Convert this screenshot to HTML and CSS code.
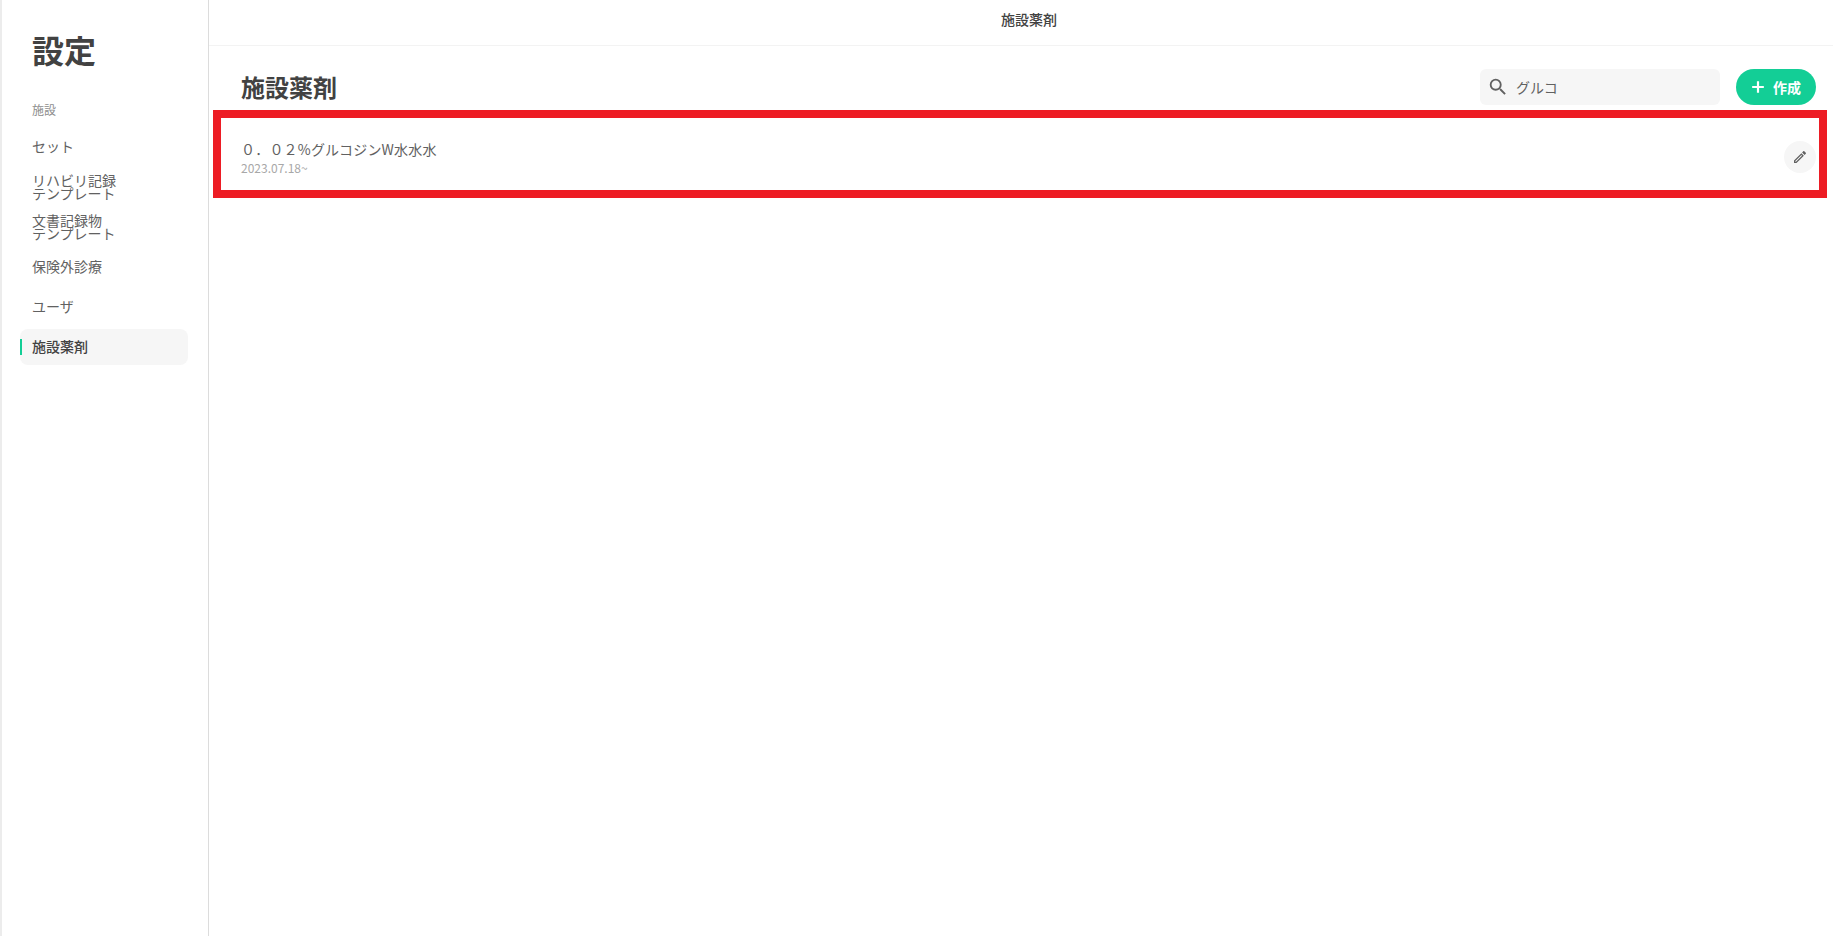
FILE: index.html
```html
<!DOCTYPE html>
<html lang="ja">
<head>
<meta charset="utf-8">
<title>施設薬剤</title>
<link rel="stylesheet" href="styles.css">
</head>
<body>
<div class="app">
  <aside class="sidebar">
    <h1 class="side-title">設定</h1>
    <div class="side-section">施設</div>
    <nav class="side-nav">
      <a class="nav-item">セット</a>
      <a class="nav-item">リハビリ記録<br>テンプレート</a>
      <a class="nav-item">文書記録物<br>テンプレート</a>
      <a class="nav-item">保険外診療</a>
      <a class="nav-item">ユーザ</a>
      <a class="nav-item active">施設薬剤</a>
    </nav>
  </aside>
  <main class="main">
    <header class="topbar">施設薬剤</header>
    <div class="page-head">
      <h2 class="page-title">施設薬剤</h2>
      <div class="actions">
        <label class="search">
          <svg class="search-icon" viewBox="0 0 24 24" width="22" height="22"><path d="M15.5 14h-.79l-.28-.27A6.47 6.47 0 0 0 16 9.5 6.5 6.5 0 1 0 9.5 16c1.61 0 3.09-.59 4.23-1.57l.27.28v.79l5 4.99L20.49 19l-4.99-5zm-6 0C7.01 14 5 11.99 5 9.5S7.01 5 9.5 5 14 7.01 14 9.5 11.99 14 9.5 14z"/></svg>
          <span class="search-text">グルコ</span>
        </label>
        <button class="create">
          <svg viewBox="0 0 24 24" width="20" height="20"><path d="M19 13.3h-5.7V19h-2.6v-5.7H5v-2.6h5.7V5h2.6v5.7H19v2.6z"/></svg>
          <span>作成</span>
        </button>
      </div>
    </div>
    <section class="list">
      <div class="row">
        <div class="row-text">
          <div class="row-name">０．０２%グルコジンW水水水</div>
          <div class="row-date">2023.07.18~</div>
        </div>
        <button class="edit">
          <svg viewBox="0 0 24 24" width="16" height="16"><path d="M3 17.25V21h3.75L17.81 9.94l-3.75-3.75L3 17.25zM5.92 19H5v-.92l9.06-9.06.92.92L5.92 19zM20.71 5.63l-2.34-2.34c-.2-.2-.45-.29-.71-.29s-.51.1-.7.29l-1.83 1.83 3.75 3.75 1.83-1.83c.39-.39.39-1.02 0-1.41z"/></svg>
        </button>
      </div>
    </section>
  </main>
</div>
</body>
</html>
```
FILE: styles.css
```css
* { box-sizing: border-box; }
html, body { margin: 0; height: 100%; }
body {
  background: #fff;
  color: #424242;
  font-family: "Noto Sans CJK JP", "Noto Sans", sans-serif;
  overflow: hidden;
}
.app { display: flex; height: 936px; border-left: 2px solid #ececec; }
.sidebar {
  width: 207px;
  flex: none;
  border-right: 1px solid #dcdcdc;
  padding: 26px 20px 0 18px;
}
.side-title {
  margin: 0 0 0 12px;
  font-size: 32px;
  line-height: 46px;
  font-weight: 700;
  color: #424242;
}
.side-section {
  margin: 29px 0 0 12px;
  font-size: 12px;
  line-height: 18px;
  color: #8d8d8d;
}
.side-nav { display: flex; flex-direction: column; gap: 4px; margin-top: 10px; }
.nav-item {
  position: relative;
  display: flex;
  align-items: center;
  min-height: 36px;
  padding-left: 12px;
  font-size: 14px;
  line-height: 13.5px;
  color: #616161;
  border-radius: 8px;
}
.nav-item.active { background: #f6f6f6; color: #424242; font-weight: 500; }
.nav-item.active::before {
  content: "";
  position: absolute;
  left: 0;
  top: 10px;
  width: 2px;
  height: 16px;
  background: #13ce96;
}
.main { flex: 1; min-width: 0; display: flex; flex-direction: column; }
.topbar {
  height: 46px;
  flex: none;
  border-bottom: 1px solid #f3f3f3;
  padding: 0 0 7px 16px;
  display: flex;
  align-items: center;
  justify-content: center;
  font-size: 14px;
  font-weight: 500;
  color: #424242;
}
.page-head {
  height: 64px;
  flex: none;
  display: flex;
  align-items: flex-start;
  justify-content: space-between;
  padding: 23px 17px 0 32px;
}
.page-title { margin: 0; font-size: 24px; font-weight: 700; line-height: 36px; color: #424242; }
.actions { display: flex; gap: 16px; align-items: center; }
.search {
  display: flex;
  align-items: center;
  gap: 7px;
  width: 240px;
  height: 36px;
  padding-left: 7px;
  background: #f6f6f6;
  border-radius: 6px;
}
.search-icon { fill: #616161; flex: none; }
.search-text { font-size: 14px; color: #616161; }
.create {
  display: flex;
  align-items: center;
  gap: 5px;
  width: 80px;
  height: 36px;
  border: 0;
  padding: 0 0 0 12px;
  border-radius: 18px;
  background: #13ce96;
  color: #fff;
  font: 700 14px "Noto Sans CJK JP", "Noto Sans", sans-serif;
}
.create svg { fill: #fff; }
.list { padding: 0 6px 0 4px; }
.row {
  height: 88px;
  border: 8px solid #ed1c24;
  display: flex;
  align-items: center;
  justify-content: space-between;
  padding: 0 3px 0 20px;
}
.row-text { padding-top: 7px; }
.row-name { font-size: 14px; line-height: 20px; color: #616161; letter-spacing: .2px; }
.row-date { margin-top: 1px; font-size: 12px; line-height: 16px; color: #a8a8a8; }
.edit {
  width: 32px;
  height: 32px;
  margin-top: 6px;
  border: 0;
  padding: 0;
  border-radius: 50%;
  background: #f6f6f6;
  display: flex;
  align-items: center;
  justify-content: center;
}
.edit svg { fill: #616161; }
```
